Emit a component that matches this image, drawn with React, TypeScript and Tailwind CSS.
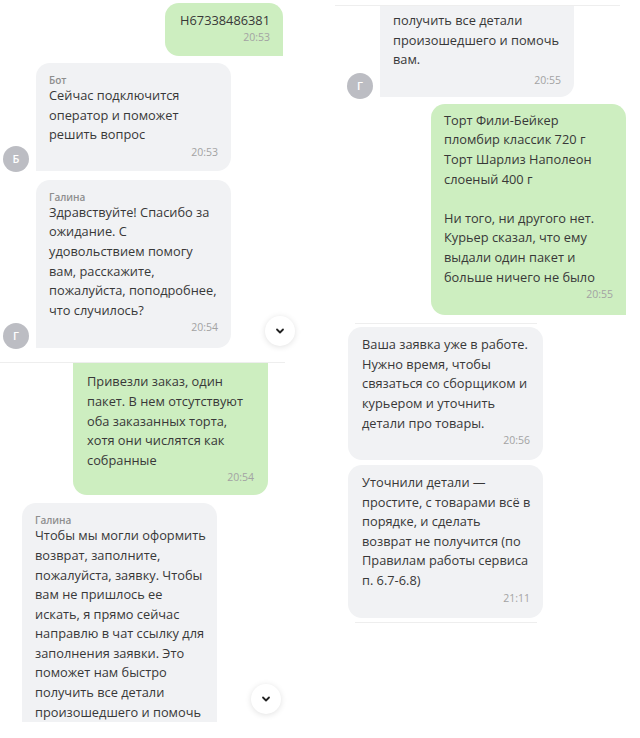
import React from 'react';

const font = { fontFamily: '"Open Sans", "Noto Sans", sans-serif' };

function Avatar({ letter, className = '' }: { letter: string; className?: string }) {
  return (
    <div
      className={`w-[26px] h-[26px] shrink-0 rounded-full bg-[#bcbdc3] text-white text-[11px] font-semibold flex items-center justify-center ${className}`}
    >
      {letter}
    </div>
  );
}

function Time({ children, className = '' }: { children: React.ReactNode; className?: string }) {
  return <div className={`text-right text-[10.5px] leading-[14px] text-[#a3a3a3] ${className}`}>{children}</div>;
}

function Name({ children }: { children: React.ReactNode }) {
  return <div className="text-[10px] leading-[12px] font-semibold text-[#8e8e8e]">{children}</div>;
}

function Body({ children }: { children: React.ReactNode }) {
  return (
    <div className="whitespace-pre text-[12.8px] leading-[19.6px] text-[#383838]">{children}</div>
  );
}

function ScrollDown({ className }: { className: string }) {
  return (
    <div
      className={`absolute w-[30px] h-[30px] rounded-full bg-white shadow-[0_1px_6px_rgba(0,0,0,0.12)] flex items-center justify-center ${className}`}
    >
      <svg width="12" height="12" viewBox="0 0 12 12" fill="none">
        <path d="M3 4.5 6 7.5 9 4.5" stroke="#222" strokeWidth="1.8" strokeLinecap="round" strokeLinejoin="round" />
      </svg>
    </div>
  );
}

export default function App() {
  return (
    <div className="w-[640px] h-[738px] bg-white flex overflow-hidden" style={font}>
      {/* left half */}
      <div className="w-[320px] shrink-0">
        <div className="relative">
          <div className="ml-[165px] mt-[3px] w-[118px] bg-[#cdeec0] rounded-[14px] rounded-br-none pl-[13px] pr-[13px] pt-[7px] pb-[12px] text-right">
            <div className="text-[12.8px] leading-[20px] text-[#383838]">Н67338486381</div>
            <Time>20:53</Time>
          </div>

          <div className="mt-[7px] flex items-end">
            <Avatar letter="Б" className="ml-[3px] -mb-px" />
            <div className="ml-[7px] w-[195px] bg-[#f1f2f4] rounded-[14px] rounded-bl-none pl-[13px] pr-[13px] pt-[11px] pb-[12px]">
              <Name>Бот</Name>
              <Body>{'Сейчас подключится\nоператор и поможет\nрешить вопрос'}</Body>
              <Time>20:53</Time>
            </div>
          </div>

          <div className="mt-[9px] flex items-end">
            <Avatar letter="Г" className="ml-[3px] -mb-px" />
            <div className="ml-[7px] w-[195px] bg-[#f1f2f4] rounded-[14px] rounded-bl-none pl-[13px] pr-[11px] pt-[11px] pb-[14px]">
              <Name>Галина</Name>
              <Body>
                {'Здравствуйте! Спасибо за\nожидание. С\nудовольствием помогу\nвам, расскажите,\nпожалуйста, поподробнее,\nчто случилось?'}
              </Body>
              <Time className="mr-[2px]">20:54</Time>
            </div>
          </div>

          <ScrollDown className="left-[265px] top-[313px]" />
        </div>

        <div className="mt-[14px] w-[285px] h-px bg-[#eeeeee]" />

        <div className="ml-[73px] w-[195px] bg-[#cdeec0] rounded-[14px] rounded-t-none pl-[14px] pr-[12px] pt-[9px] pb-[11px]">
          <Body>
            {'Привезли заказ, один\nпакет. В нем отсутствуют\nоба заказанных торта,\nхотя они числятся как\nсобранные'}
          </Body>
          <Time className="mr-[2px]">20:54</Time>
        </div>

        <div className="relative mt-[8px] h-[219px] overflow-hidden">
          <div className="ml-[22px] w-[195px] bg-[#f1f2f4] rounded-t-[14px] pl-[13px] pr-[10px] pt-[11px] pb-[12px]">
            <Name>Галина</Name>
            <Body>
              {'Чтобы мы могли оформить\nвозврат, заполните,\nпожалуйста, заявку. Чтобы\nвам не пришлось ее\nискать, я прямо сейчас\nнаправлю в чат ссылку для\nзаполнения заявки. Это\nпоможет нам быстро\nполучить все детали\nпроизошедшего и помочь\nвам.'}
            </Body>
          </div>
          <ScrollDown className="left-[251px] top-[181px]" />
        </div>
      </div>

      {/* right half */}
      <div className="w-[320px] shrink-0">
        <div className="mt-[5px] ml-[15px] w-[285px] h-px bg-[#eeeeee]" />

        <div className="flex items-end">
          <Avatar letter="Г" className="ml-[27px] -mb-[2px]" />
          <div className="ml-[7px] w-[194px] bg-[#f1f2f4] rounded-b-[14px] rounded-bl-none pl-[13px] pr-[13px] pt-[5px] pb-[10px]">
            <Body>{'получить все детали\nпроизошедшего и помочь\nвам.'}</Body>
            <Time className="mt-[3px]">20:55</Time>
          </div>
        </div>

        <div className="mt-[7px] ml-[111px] w-[195px] bg-[#cdeec0] rounded-[14px] rounded-br-none pl-[13px] pr-[13px] pt-[7px] pb-[14px]">
          <Body>
            {'Торт Фили-Бейкер\nпломбир классик 720 г\nТорт Шарлиз Наполеон\nслоеный 400 г\n\nНи того, ни другого нет.\nКурьер сказал, что ему\nвыдали один пакет и\nбольше ничего не было'}
          </Body>
          <Time>20:55</Time>
        </div>

        <div className="mt-[8px] ml-[35px] w-[182px] h-px bg-[#eeeeee]" />

        <div className="mt-[3px] ml-[28px] w-[195px] bg-[#f1f2f4] rounded-[14px] pl-[14px] pr-[11px] pt-[8px] pb-[13px]">
          <Body>
            {'Ваша заявка уже в работе.\nНужно время, чтобы\nсвязаться со сборщиком и\nкурьером и уточнить\nдетали про товары.'}
          </Body>
          <Time className="mr-[2px]">20:56</Time>
        </div>

        <div className="mt-[5px] ml-[28px] w-[195px] bg-[#f1f2f4] rounded-[14px] pl-[14px] pr-[11px] pt-[8px] pb-[13px]">
          <Body>
            {'Уточнили детали —\nпростите, с товарами всё в\nпорядке, и сделать\nвозврат не получится (по\nПравилам работы сервиса\nп. 6.7-6.8)'}
          </Body>
          <Time className="mr-[2px]">21:11</Time>
        </div>

        <div className="mt-[4px] ml-[35px] w-[182px] h-px bg-[#eeeeee]" />
      </div>
    </div>
  );
}
